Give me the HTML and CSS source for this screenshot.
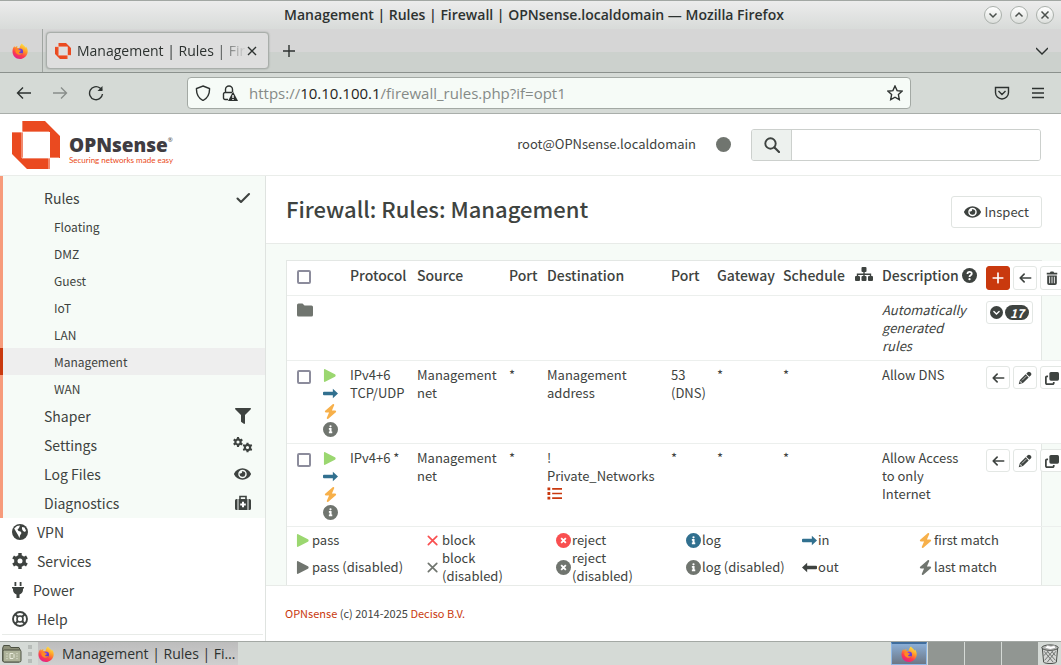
FILE: index.html
```html
<!DOCTYPE html>
<html lang="en">
<head>
<meta charset="utf-8">
<title>Management | Rules | Firewall | OPNsense.localdomain</title>
<link rel="stylesheet" href="styles.css">
</head>
<body>
<svg class="defs" aria-hidden="true">
  <defs>
    <linearGradient id="fox-g" x1="0.8" y1="0" x2="0.3" y2="1"><stop offset="0" stop-color="#fff04a"/><stop offset="0.4" stop-color="#ff9a26"/><stop offset="0.7" stop-color="#ff3d4c"/><stop offset="1" stop-color="#e0208c"/></linearGradient>
    <linearGradient id="fox-p" x1="0" y1="0" x2="1" y2="1"><stop offset="0" stop-color="#9b46ee"/><stop offset="1" stop-color="#4a36c8"/></linearGradient>
  </defs>
  <symbol id="firefox" viewBox="0 0 32 32">
    <path fill="url(#fox-g)" d="M20 1c1 3 5 4 7 8 1 0 1-1 1-2 3 4 4 8 3 13-2 7-8 12-15 12C7 32 1 25 1 17c0-4 1-8 4-11 0 1 0 2 1 3 2-2 4-3 5-3-1 2-1 3 0 4h4c1-4 2-7 5-9z"/>
    <circle cx="16" cy="17" r="6" fill="url(#fox-p)"/>
    <path fill="#ff8a22" d="M7 13c3-2 6-1 8 1 1 1 3 1 3 2s-3 1-4 3c1 2 4 2 7 1-2 4-8 5-12 1-2-2-3-5-2-8z"/>
  </symbol>
  <symbol id="brand" viewBox="0 0 48 48"><path fill="#ea4a20" fill-rule="evenodd" d="M10 0h23l15 15v22H38v11H15L0 33V11h10zM11 11h27v26H11z"/><path d="M10 0v37h37M0 11h37v37" fill="none" stroke="#fff" stroke-width="1" opacity=".7"/></symbol>
  <symbol id="eye" viewBox="0 0 576 512"><path d="M572.52 241.4C518.29 135.59 410.93 64 288 64S57.68 135.64 3.48 241.41a32.35 32.35 0 0 0 0 29.19C57.71 376.41 165.07 448 288 448s230.32-71.64 284.52-177.41a32.35 32.35 0 0 0 0-29.19zM288 400a144 144 0 1 1 144-144 143.93 143.93 0 0 1-144 144zm0-240a95.31 95.31 0 0 0-25.31 3.79 47.85 47.85 0 0 1-66.9 66.9A95.78 95.78 0 1 0 288 160z"/></symbol>
  <symbol id="filter" viewBox="0 0 512 512"><path d="M487.976 0H24.028C2.71 0-8.047 25.866 7.058 40.971L192 225.941V432c0 7.831 3.821 15.17 10.237 19.662l80 55.98C298.02 518.69 320 507.493 320 487.98V225.941l184.947-184.97C520.021 25.896 509.338 0 487.976 0z"/></symbol>
  <symbol id="bolt" viewBox="0 0 448 512"><path d="M349.4 44.6c5.9-13.7 1.5-29.7-10.6-38.5s-28.6-8-39.9 1.8l-256 224c-10 8.8-13.6 22.9-8.9 35.3S50.7 288 64 288H175.500L98.6 467.4c-5.9 13.7-1.5 29.7 10.6 38.500s28.6 8 39.9-1.8l256-224c10-8.8 13.6-22.9 8.9-35.3s-16.6-20.7-30-20.7H272.500L349.4 44.600z"/></symbol>
  <symbol id="play" viewBox="0 0 448 512"><path d="M41 39c-14.8-9.1-41-.9-41 41V432c0 42 26.200 50.100 41 41L375 297c34-18 34-64 0-82L41 39z"/></symbol>
  <symbol id="info" viewBox="0 0 512 512"><path d="M256 512A256 256 0 1 0 256 0a256 256 0 1 0 0 512zM200 326h24V262H200v-58h92v122h24v58H200zM256 110a38 38 0 1 1 0 76 38 38 0 1 1 0-76z"/></symbol>
  <symbol id="xcircle" viewBox="0 0 16 16"><circle cx="8" cy="8" r="8"/><path d="M5.500 5.500l5 5m0-5l-5 5" stroke="#fff" stroke-width="2"/></symbol>
  <symbol id="question" viewBox="0 0 16 16"><circle cx="8" cy="8" r="8"/><path d="M5.800 6.300c0-3 4.600-2.800 4.600-.2C10.400 7.800 8 7.700 8 9.500" fill="none" stroke="#fff" stroke-width="1.900"/><circle cx="8" cy="11.900" r="1.200" fill="#fff"/></symbol>
  <symbol id="times" viewBox="0 0 16 16"><path d="M2.500 3.500l9 9m0-9l-9 9" stroke="currentColor" stroke-width="1.800" stroke-linecap="round"/></symbol>
  <symbol id="long-right" viewBox="0 0 16 16"><path d="M1 6.200h9.500V3L16 8l-5.500 5V9.800H1a1 1 0 0 1-1-1V7.200a1 1 0 0 1 1-1z"/></symbol>
  <symbol id="long-left" viewBox="0 0 16 16"><path d="M15 6.200H5.500V3L0 8l5.500 5V9.800H15a1 1 0 0 0 1-1V7.200a1 1 0 0 0-1-1z"/></symbol>
  <symbol id="arrow-left" viewBox="0 0 16 16"><path d="M14.500 8H2.500M7 3.500L2.500 8 7 12.500" fill="none" stroke="currentColor" stroke-width="1.900" stroke-linecap="round" stroke-linejoin="round"/></symbol>
  <symbol id="plus" viewBox="0 0 16 16"><path d="M8 2.500v11M2.500 8h11" stroke="currentColor" stroke-width="1.900" stroke-linecap="round"/></symbol>
  <symbol id="check" viewBox="0 0 16 16"><path d="M2.500 8.500L6 12l8-8" fill="none" stroke="currentColor" stroke-width="2.100" stroke-linecap="round" stroke-linejoin="round"/></symbol>
  <symbol id="trash" viewBox="0 0 16 16"><path d="M2 2h3.500l1-1.500h3l1 1.500H14v2H2zM2.500 5h11v9a2 2 0 0 1-2 2h-7a2 2 0 0 1-2-2z"/><path d="M5.300 6.500V14M8 6.500V14M10.700 6.500V14" stroke="#fff"/></symbol>
  <symbol id="pencil" viewBox="0 0 16 16"><path d="M11 1.500c1-1 2-1 3 0l.6.600c1 1 1 2 0 3L13 6.500 9.500 3zM8.700 3.800l3.500 3.500-6.500 6.500L.8 15.200 2.200 10.300z"/><path d="M4.500 10.800l5-5M3 11.500v1.500h1.500" fill="none" stroke="#fff" stroke-width=".8"/></symbol>
  <symbol id="clone" viewBox="0 0 16 16"><rect x="5" y="1" width="11" height="10" rx="1.800"/><path d="M3.500 6H2.200A1.200 1.200 0 0 0 1 7.200v6.600A1.200 1.200 0 0 0 2.200 15h6.600a1.200 1.200 0 0 0 1.200-1.200v-1.300" fill="none" stroke="currentColor" stroke-width="2"/></symbol>
  <symbol id="folder" viewBox="0 0 16 16"><path d="M0 3A1.500 1.500 0 0 1 1.500 1.500h4l2 2h7A1.500 1.500 0 0 1 16 5v8a1.500 1.500 0 0 1-1.500 1.500h-13A1.500 1.500 0 0 1 0 13z"/></symbol>
  <symbol id="sitemap" viewBox="0 0 18 16"><rect x="6.500" y="1" width="5" height="5" rx="1"/><rect x="0" y="10" width="5" height="5" rx="1"/><rect x="6.500" y="10" width="5" height="5" rx="1"/><rect x="13" y="10" width="5" height="5" rx="1"/><path d="M9 5v6M2.500 11V8.200h13V11" fill="none" stroke="currentColor" stroke-width="1.400"/></symbol>
  <symbol id="chev" viewBox="0 0 16 16"><circle cx="8" cy="8" r="8"/><path d="M4.800 6.800L8 9.800l3.200-3" fill="none" stroke="#fff" stroke-width="1.700" stroke-linecap="round"/></symbol>
  <symbol id="list" viewBox="0 0 16 16"><path d="M5.500 3H16M5.500 8H16M5.500 13H16" stroke="currentColor" stroke-width="1.800"/><path d="M.5 1.500h3v3h-3zM.5 6.500h3v3h-3zM.5 11.500h3v3h-3z"/></symbol>
  <symbol id="cog" viewBox="0 0 16 16"><circle cx="8" cy="8" r="4.200" fill="none" stroke="currentColor" stroke-width="3.400"/><path d="M8 0v3.500M8 12.500V16M1.100 4l3 1.750M11.900 10.250l3 1.750M14.900 4l-3 1.750M4.100 10.250l-3 1.750" stroke="currentColor" stroke-width="3.400"/></symbol>
  <symbol id="cogs" viewBox="0 0 20 16"><use href="#cog" x="0" y="0" width="10" height="10"/><use href="#cog" x="9.500" y="5.500" width="10" height="10"/></symbol>
  <symbol id="medkit" viewBox="0 0 16 16"><path d="M0 5.500A1.500 1.500 0 0 1 1.500 4H2.500v11h-1A1.500 1.500 0 0 1 0 13.500zM13.500 4h1A1.500 1.500 0 0 1 16 5.500v8a1.500 1.500 0 0 1-1.500 1.500h-1zM3.500 4h9v11h-9z"/><path d="M5 4V1.500h6V4" fill="none" stroke="currentColor" stroke-width="1.600"/><path d="M8 6.700v5.600M5.200 9.500h5.600" stroke="#fff" stroke-width="2"/></symbol>
  <symbol id="globe" viewBox="0 0 16 16"><circle cx="8" cy="8" r="8"/><path fill="#fff" d="M2.200 4.500L5 2l3-.5L7 4 5.500 5.500l1 1.500 2 .5L9.500 9 8 11.500 7.500 14 6 11 4.500 8.500zM10 3l2.500.5 1.500 3L13 8l-2-1-1-2z"/></symbol>
  <symbol id="plug" viewBox="0 0 12 16"><path d="M2.500 0h1.800v4H2.500zM7.700 0h1.800v4H7.700zM0 5h12v1.500h-1V8a5 5 0 0 1-3.500 4.500V16h-3v-3.500A5 5 0 0 1 1 8V6.500H0z"/></symbol>
  <symbol id="ring" viewBox="0 0 16 16"><g fill="none" stroke="currentColor"><circle cx="8" cy="8" r="7" stroke-width="1.900"/><circle cx="8" cy="8" r="3" stroke-width="1.600"/><path d="M3 3l3 3M13 3l-3 3M3 13l3-3M13 13l-3-3" stroke-width="2"/></g></symbol>
  <symbol id="search" viewBox="0 0 16 16"><circle cx="6.500" cy="6.500" r="5.200" fill="none" stroke="currentColor" stroke-width="1.900"/><path d="M10.500 10.500l4.500 4.500" stroke="currentColor" stroke-width="2.100" stroke-linecap="round"/></symbol>
</svg>

<header class="titlebar">
  <span class="window-title">Management | Rules | Firewall | OPNsense.localdomain — Mozilla Firefox</span>
  <div class="window-buttons">
    <button class="round" aria-label="Minimize"><svg viewBox="0 0 16 16"><path d="M4.500 6.500L8 10l3.500-3.500"/></svg></button>
    <button class="round" aria-label="Maximize"><svg viewBox="0 0 16 16"><path d="M4.500 9.500L8 6l3.500 3.500"/></svg></button>
    <button class="round" aria-label="Close"><svg viewBox="0 0 16 16"><path d="M4.500 4.500l7 7m0-7l-7 7"/></svg></button>
  </div>
</header>

<div class="tabbar">
  <button class="pinned" aria-label="Firefox View"><svg class="i16"><use href="#firefox"/></svg></button>
  <div class="tab">
    <svg class="i16"><use href="#brand"/></svg>
    <span class="tab-text">Management | Rules | Fire</span>
    <button class="plain" aria-label="Close tab"><svg class="i12 line" viewBox="0 0 12 12"><path d="M2 2l8 8m0-8l-8 8"/></svg></button>
  </div>
  <button class="plain newtab" aria-label="New tab"><svg class="i12 line" viewBox="0 0 12 12"><path d="M6 0v12M0 6h12"/></svg></button>
  <button class="plain alltabs" aria-label="List all tabs"><svg class="i12 line" viewBox="0 0 12 12"><path d="M0 3l6 6 6-6"/></svg></button>
</div>

<nav class="toolbar">
  <div class="nav-buttons">
    <button class="plain" aria-label="Back"><svg class="i16 line" viewBox="0 0 16 16"><path d="M15 8H1.500M7 2.500L1.500 8 7 13.500"/></svg></button>
    <button class="plain faded" aria-label="Forward"><svg class="i16 line" viewBox="0 0 16 16"><path d="M1 8h13.500M9 2.500L14.500 8 9 13.500"/></svg></button>
    <button class="plain" aria-label="Reload"><svg class="i16 line" viewBox="0 0 16 16"><path d="M14.500 9A6.500 6.500 0 1 1 12 3l2 2"/><path d="M14.500 1v5h-5z" fill="currentColor" stroke="none"/></svg></button>
  </div>
  <div class="address">
    <svg class="i16 line" viewBox="0 0 16 16"><path d="M8 1l6.500 2.500c.3 6-2 9.500-6.500 12-4.500-2.500-6.800-6-6.500-12z"/></svg>
    <svg class="i16 line" viewBox="0 0 16 16"><path d="M6 14.500H3a1.500 1.500 0 0 1-1.500-1.500V9A1.500 1.500 0 0 1 3 7.500h7M3.500 7V4.500a3.500 3.500 0 0 1 7 0V7"/><path d="M11 6.500L16 16H6z" fill="currentColor" stroke="none"/><path d="M11 10v3m0 1v1" stroke="#fff"/></svg>
    <span class="url">https://<b>10.10.100.1</b>/firewall_rules.php?if=opt1</span>
    <button class="plain" aria-label="Bookmark"><svg class="i16 line" viewBox="0 0 16 16"><path d="M8 1l2.100 4.600 4.900.6-3.600 3.400.9 5L8 12.200 3.700 14.600l.9-5L1 6.200l4.900-.6z"/></svg></button>
  </div>
  <div class="tool-buttons">
    <button class="plain" aria-label="Pocket"><svg class="i16 line" viewBox="0 0 16 16"><path d="M1.500 2.500h13v5a6.500 6.500 0 0 1-13 0zM4.500 6L8 9.500 11.500 6"/></svg></button>
    <button class="plain" aria-label="Menu"><svg class="i16 line" viewBox="0 0 16 16"><path d="M2 3.500h12M2 8h12M2 12.500h12"/></svg></button>
  </div>
</nav>

<div class="page">
  <header class="site-header">
    <a class="logo" href="#">
      <svg class="logo-mark"><use href="#brand"/></svg>
      <span class="logo-words"><span class="logo-name">OPNsense<span class="reg">®</span></span><span class="tagline">Securing networks made easy</span></span>
    </a>
    <span class="user">root@OPNsense.localdomain</span>
    <span class="status-dot"></span>
    <div class="search">
      <label class="search-label" for="q" aria-label="Search"><svg class="i16"><use href="#search"/></svg></label>
      <input id="q" type="text">
    </div>
  </header>

  <div class="columns">
    <aside class="sidebar">
      <div class="submenu">
        <a class="item" href="#">Rules<svg class="i16"><use href="#check"/></svg></a>
        <a class="sub" href="#">Floating</a>
        <a class="sub" href="#">DMZ</a>
        <a class="sub" href="#">Guest</a>
        <a class="sub" href="#">IoT</a>
        <a class="sub" href="#">LAN</a>
        <a class="sub active" href="#">Management</a>
        <a class="sub" href="#">WAN</a>
        <a class="item" href="#">Shaper<svg class="i16"><use href="#filter"/></svg></a>
        <a class="item" href="#">Settings<svg class="i20"><use href="#cogs"/></svg></a>
        <a class="item" href="#">Log Files<svg class="eye-icon"><use href="#eye"/></svg></a>
        <a class="item" href="#">Diagnostics<svg class="i16"><use href="#medkit"/></svg></a>
      </div>
      <div class="mainmenu">
        <a class="top" href="#"><svg class="i16"><use href="#globe"/></svg>VPN</a>
        <a class="top" href="#"><svg class="i16"><use href="#cog"/></svg>Services</a>
        <a class="top" href="#"><svg class="i12w"><use href="#plug"/></svg>Power</a>
        <a class="top" href="#"><svg class="i16"><use href="#ring"/></svg>Help</a>
      </div>
    </aside>

    <main class="main">
      <div class="heading">
        <h1>Firewall: Rules: Management</h1>
        <button class="inspect"><svg class="eye-icon"><use href="#eye"/></svg>Inspect</button>
      </div>
      <div class="content">
        <div class="box">
          <table class="rules">
            <colgroup><col class="c-check"><col class="c-icons"><col class="c-proto"><col class="c-source"><col class="c-port"><col class="c-dest"><col class="c-dport"><col class="c-gate"><col class="c-sched"><col class="c-cat"><col class="c-desc"><col class="c-cmd"></colgroup>
            <thead>
              <tr>
                <th><input type="checkbox" aria-label="Select all"></th><th></th><th>Protocol</th><th>Source</th><th>Port</th><th>Destination</th><th>Port</th><th>Gateway</th><th>Schedule</th>
                <th><svg class="i18"><use href="#sitemap"/></svg></th>
                <th>Description <svg class="i15"><use href="#question"/></svg></th>
                <th><div class="cmds"><button class="btn primary" aria-label="Add"><svg class="i14"><use href="#plus"/></svg></button><button class="btn" aria-label="Move"><svg class="i14"><use href="#arrow-left"/></svg></button><button class="btn" aria-label="Delete"><svg class="i14"><use href="#trash"/></svg></button></div></th>
              </tr>
            </thead>
            <tbody>
              <tr>
                <td><svg class="i16 grey"><use href="#folder"/></svg></td><td></td><td></td><td></td><td></td><td></td><td></td><td></td><td></td><td></td>
                <td class="desc"><i>Automatically generated rules</i></td>
                <td><div class="cmds"><button class="btn count" aria-label="Expand"><svg class="i13"><use href="#chev"/></svg><span class="badge">17</span></button></div></td>
              </tr>
              <tr>
                <td><input type="checkbox" aria-label="Select Allow DNS"></td>
                <td><div class="stack"><svg class="i15 green"><use href="#play"/></svg><svg class="i15 blue"><use href="#long-right"/></svg><svg class="i15 orange"><use href="#bolt"/></svg><svg class="i15 grey"><use href="#info"/></svg></div></td>
                <td>IPv4+6 TCP/UDP</td><td>Management net</td><td>*</td><td>Management address</td><td>53 (DNS)</td><td>*</td><td>*</td><td></td><td class="desc">Allow DNS</td>
                <td><div class="cmds"><button class="btn" aria-label="Move"><svg class="i14"><use href="#arrow-left"/></svg></button><button class="btn" aria-label="Edit"><svg class="i14"><use href="#pencil"/></svg></button><button class="btn" aria-label="Clone"><svg class="i14"><use href="#clone"/></svg></button></div></td>
              </tr>
              <tr>
                <td><input type="checkbox" aria-label="Select Allow Access to only Internet"></td>
                <td><div class="stack"><svg class="i15 green"><use href="#play"/></svg><svg class="i15 blue"><use href="#long-right"/></svg><svg class="i15 orange"><use href="#bolt"/></svg><svg class="i15 grey"><use href="#info"/></svg></div></td>
                <td>IPv4+6 *</td><td>Management net</td><td>*</td><td>! Private_Networks <svg class="i15 red"><use href="#list"/></svg></td><td>*</td><td>*</td><td>*</td><td></td><td class="desc">Allow Access to only Internet</td>
                <td><div class="cmds"><button class="btn" aria-label="Move"><svg class="i14"><use href="#arrow-left"/></svg></button><button class="btn" aria-label="Edit"><svg class="i14"><use href="#pencil"/></svg></button><button class="btn" aria-label="Clone"><svg class="i14"><use href="#clone"/></svg></button></div></td>
              </tr>
            </tbody>
          </table>
          <table class="legend">
            <colgroup><col class="ic"><col class="wide"><col class="ic"><col class="wide"><col class="ic"><col class="wide"><col class="ic"><col class="mid"><col class="ic"><col class="mid"><col class="ic"><col></colgroup>
            <tbody>
              <tr>
                <td><svg class="i15 green"><use href="#play"/></svg></td><td>pass</td>
                <td><svg class="i15 bright"><use href="#times"/></svg></td><td>block</td>
                <td><svg class="i15 bright"><use href="#xcircle"/></svg></td><td>reject</td>
                <td><svg class="i15 blue"><use href="#info"/></svg></td><td>log</td>
                <td><svg class="i15 blue"><use href="#long-right"/></svg></td><td>in</td>
                <td><svg class="i15 orange"><use href="#bolt"/></svg></td><td>first match</td>
              </tr>
              <tr>
                <td><svg class="i15 grey"><use href="#play"/></svg></td><td>pass (disabled)</td>
                <td><svg class="i15 grey"><use href="#times"/></svg></td><td>block<br>(disabled)</td>
                <td><svg class="i15 grey"><use href="#xcircle"/></svg></td><td>reject<br>(disabled)</td>
                <td><svg class="i15 grey"><use href="#info"/></svg></td><td>log (disabled)</td>
                <td><svg class="i15"><use href="#long-left"/></svg></td><td>out</td>
                <td><svg class="i15 grey"><use href="#bolt"/></svg></td><td>last match</td>
              </tr>
            </tbody>
          </table>
        </div>
      </div>
      <footer class="footer"><a href="#">OPNsense</a> (c) 2014-2025 <a href="#">Deciso B.V.</a></footer>
    </main>
  </div>
</div>

<footer class="taskbar">
  <button class="plain" aria-label="Files"><svg class="i20" viewBox="0 0 20 20"><path d="M.7 4l1-2.500h6l1 2H17l1 2v11l-1 1.500H1.700l-1-1z" fill="#8d9079" stroke="#4c5142"/><rect x="1" y="6" width="18" height="12" rx="1.500" fill="#aeb39a" stroke="#4c5142"/><path d="M5 9.500v.1M5 12v.1M5 14.500v.1M15 9.500v.1M15 12v.1M15 14.500v.1" stroke="#e9ecdc" stroke-linecap="round" stroke-width="1.200"/><path d="M8 9.500v5h3l1-1v-3l-1-1z" fill="none" stroke="#e9ecdc"/></svg></button>
  <span class="grip"></span>
  <button class="task"><svg class="i16"><use href="#firefox"/></svg><span>Management | Rules | Fi…</span></button>
  <div class="pager">
    <button class="desk current" aria-label="Desktop 1"><svg class="i16"><use href="#firefox"/></svg></button>
    <button class="desk" aria-label="Desktop 2"></button>
    <button class="desk" aria-label="Desktop 3"></button>
    <button class="desk" aria-label="Desktop 4"></button>
    <button class="plain bin" aria-label="Trash"><svg class="i20" viewBox="0 0 20 22"><path d="M1.500 4l1.500 16c2 2 12 2 14 0L18.500 4z" fill="#d5d7d5" stroke="#3f423f"/><path d="M3.500 8l10 12M7 8l9 10M12 8l4 5M16.500 8L7 20M13 8L4 18M8 8l-5 5" stroke="#676b68"/><ellipse cx="10" cy="4" rx="9" ry="3" fill="#b9bcb9" stroke="#3f423f"/><path d="M4 4.500l3-3 4 1 4-1 1.500 3-6 1.500z" fill="#fff" stroke="#8a8c8a" stroke-width=".6"/></svg></button>
  </div>
</footer>
</body>
</html>
```
FILE: styles.css
```css
* { box-sizing: border-box; }

body {
  margin: 0;
  height: 100vh;
  display: flex;
  flex-direction: column;
  overflow: hidden;
  font: 13px/18px "Noto Sans CJK SC", "Noto Sans", sans-serif;
  color: #3e4340;
  background: #fff;
}

a { color: inherit; text-decoration: none; }
button { font: inherit; color: inherit; padding: 0; }
svg { fill: currentColor; flex: none; display: block; }

.defs { position: absolute; width: 0; height: 0; }
.i12 { width: 12px; height: 12px; }
.i12w { width: 12px; height: 16px; }
.i13 { width: 13px; height: 13px; }
.i14 { width: 14px; height: 14px; }
.i15 { width: 15px; height: 15px; }
.i16 { width: 16px; height: 16px; }
.i18 { width: 18px; height: 16px; }
.i20 { width: 20px; height: 20px; }
.line { fill: none; stroke: currentColor; stroke-width: 1.4; }

.green { color: #9bd770; }
.blue { color: #31708f; }
.orange { color: #f7b04a; }
.grey { color: #70756f; }
.red { color: #c9390e; }
.bright { color: #f94f50; }

.plain { border: 0; background: none; display: grid; place-items: center; }

/* browser window */
.titlebar, .tabbar, .toolbar, .taskbar {
  flex: none;
  display: flex;
  align-items: center;
  font-family: "Open Sans", "Noto Sans", sans-serif;
  color: #2d3230;
}

.titlebar {
  height: 29px;
  border-top: 1px solid #a2a7a3;
  background: linear-gradient(#ececec, #d8dbd9);
  font-size: 14px;
  font-weight: 600;
}
.window-title { flex: 1; text-align: center; padding-left: 84px; }
.window-buttons { display: flex; gap: 8px; padding-right: 7px; }
.round {
  width: 18px;
  height: 18px;
  border: 1px solid #aab0ab;
  border-radius: 50%;
  background: linear-gradient(#fff, #dcdfdc);
}
.round svg { width: 16px; height: 16px; fill: none; stroke: #4b504d; stroke-width: 1.5; }

.tabbar {
  height: 44px;
  border-bottom: 1px solid #8b918d;
  background: linear-gradient(#d6d6d6 23px, #ccd1cd 23px);
  font-size: 14px;
}
.pinned {
  width: 43px;
  height: 100%;
  padding-right: 3px;
  border: 0;
  border-right: 1px solid #a0a5a1;
  background: none;
  display: grid;
  place-items: center;
}
.tab {
  display: flex;
  align-items: center;
  width: 223px;
  height: 37px;
  margin-left: 3px;
  padding: 0 10px 0 8px;
  border: 1px solid #a9aeaa;
  border-radius: 4px;
  background: #dedede;
  box-shadow: 0 0 2px #9a9f9b;
}
.tab .plain { margin-left: -8px; }
.tab-text {
  flex: 1;
  margin-left: 6px;
  white-space: nowrap;
  mask-image: linear-gradient(to right, #000 78%, transparent 96%);
}
.newtab { width: 40px; }
.alltabs { margin-left: auto; width: 38px; }

.toolbar { height: 41px; border-bottom: 1px solid #a9aeaa; background: #d5dad6; font-size: 15px; }
.nav-buttons { flex: none; display: flex; gap: 20px; width: 187px; padding-left: 16px; }
.faded { opacity: 0.45; }
.address {
  flex: 1;
  display: flex;
  align-items: center;
  gap: 11px;
  height: 32px;
  padding: 0 7px;
  border: 1px solid #a3a9a4;
  border-radius: 4px;
  background: #f6fbf7;
}
.url { flex: 1; color: #858a87; }
.url b { font-weight: 400; color: #1f2422; }
.tool-buttons { flex: none; display: flex; justify-content: flex-end; gap: 20px; width: 150px; padding-right: 15px; }

/* web page */
.page { flex: 1; min-height: 0; display: flex; flex-direction: column; overflow: hidden; }

.site-header {
  flex: none;
  display: flex;
  align-items: center;
  height: 62px;
  padding: 0 20px 0 12px;
  border-bottom: 1px solid #eaedea;
}
.logo { display: flex; gap: 9px; margin-right: auto; }
.logo-mark { width: 48px; height: 48px; }
.logo-words { display: flex; flex-direction: column; padding-top: 14px; }
.logo-name { display: flex; align-items: flex-start; font: 800 19px/20px "Open Sans", sans-serif; color: #403c41; }
.reg { font-size: 6px; font-weight: 400; line-height: 10px; }
.tagline { font: 8px/10px "Lato", sans-serif; color: #ea4a20; }
.user { padding-bottom: 2px; }
.status-dot { width: 15px; height: 15px; margin: 0 20px; border-radius: 50%; background: #70756f; }
.search { display: flex; width: 290px; height: 32px; border: 1px solid #ccd0cd; border-radius: 3px; overflow: hidden; }
.search-label { width: 40px; display: grid; place-items: center; background: #edf1ee; border-right: 1px solid #ccd0cd; }
.search input { flex: 1; min-width: 0; border: 0; font: inherit; padding: 0 8px; }

.columns { flex: 1; min-height: 0; display: flex; }

.sidebar { flex: none; width: 266px; border-right: 1px solid #dfe3e0; font-size: 14px; }
.submenu { padding-top: 8px; border-left: 3px solid #f79b7b; background: #f6fbf7; }
.item, .top { display: flex; align-items: center; padding-bottom: 2px; }
.item { height: 29px; padding-left: 41px; padding-right: 14px; justify-content: space-between; }
.item .i20 { margin-right: -2px; }
.sub { display: flex; align-items: center; height: 27px; padding-left: 51px; font-size: 12px; }
.sub.active { margin-left: -3px; border-left: 3px solid #c9390e; background: #eee; }
.mainmenu { margin: 0 2px; border-bottom: 1px solid #e8ebe8; }
.top { height: 29px; padding-left: 10px; gap: 9px; }

.main { flex: 1; min-width: 0; display: flex; flex-direction: column; }
.heading {
  flex: none;
  display: flex;
  align-items: center;
  justify-content: space-between;
  height: 68px;
  padding: 4px 19px 0 20px;
  border-bottom: 1px solid #e8ebe8;
}
h1 { margin: 0 0 8px; font-size: 22px; line-height: 32px; font-weight: 500; }
.inspect {
  display: flex;
  align-items: center;
  gap: 4px;
  height: 32px;
  padding: 0 12px;
  border: 1px solid #e0e4e1;
  border-radius: 3px;
  background: #fff;
}
.eye-icon { width: 17px; height: 16px; }

.content { flex: none; padding: 16px 19px 0 20px; background: #f6fbf7; border-bottom: 1px solid #e8ebe8; }
.box { border: 1px solid #e3e7e4; border-bottom: 0; background: #fff; }

/* the command column runs past the right edge of the box */
.rules { width: calc(100% + 49px); table-layout: fixed; border-collapse: collapse; }
.rules th, .rules td { padding: 5px; text-align: left; vertical-align: top; font-weight: 400; border-bottom: 1px solid #ecefed; }
.rules th { font-size: 14px; font-weight: 500; white-space: nowrap; }
.rules .desc { padding-right: 12px; }
.rules thead tr, .rules tbody tr:nth-child(even) { background: #fff; }
.rules th:first-child, .rules td:first-child { padding-left: 10px; }
.rules td svg { margin-top: 1px; }
.rules .cmds svg, .rules .stack svg { margin: 0; }
.rules th .i15 { display: inline-block; vertical-align: -2px; }
.c-check { width: 31px; }
.c-icons { width: 27px; }
.c-proto { width: 67px; }
.c-source { width: 92px; }
.c-port { width: 38px; }
.c-dport { width: 46px; }
.c-gate { width: 66px; }
.c-sched { width: 72px; }
.c-cat { width: 27px; }
.c-desc { width: 104px; }
.c-cmd { width: 109px; }

input[type="checkbox"] {
  appearance: none;
  display: block;
  width: 14px;
  height: 14px;
  margin: 4px 0 0;
  border: 2px solid #8c8c9c;
  border-radius: 2px;
  background: #fff;
}

.stack { display: grid; grid-auto-rows: 18px; align-items: center; }
.cmds { display: flex; gap: 3px; }
.btn {
  display: flex;
  align-items: center;
  justify-content: center;
  width: 24px;
  height: 23px;
  border: 1px solid #e3e7e4;
  border-radius: 3px;
  background: #fff;
}
.rules thead .btn { height: 24px; }
.btn.primary { border-color: #c9390e; background: #c9390e; color: #fff; }
.count { width: 47px; gap: 2px; }
.badge { width: 24px; height: 15px; border-radius: 8px; background: #3e4340; color: #fff; font-size: 12px; line-height: 15px; font-style: italic; font-weight: 700; }

.legend { width: 100%; table-layout: fixed; border-collapse: collapse; margin: 4px 0 0; }
.legend td { padding: 0; }
.legend td:first-child { padding-left: 9px; }
.legend .ic { width: 16px; }
.legend .ic:first-child { width: 25px; }
.legend .wide { width: 114px; }
.legend .mid { width: 100px; }

.footer { padding: 18px 19px; font-size: 11px; }
.footer a { color: #c9390e; }

/* desktop panel */
.taskbar { height: 24px; border-top: 1px solid #a3a8a4; background: #d5dad6; font-size: 14px; }
.taskbar > .plain { width: 24px; }
.grip { width: 4px; height: 18px; margin: 0 6px 0 4px; background: repeating-linear-gradient(#b7bcb8 0 4px, transparent 4px 7px); }
.task { display: flex; align-items: center; gap: 8px; width: 200px; height: 100%; padding: 0; border: 0; background: linear-gradient(#bdbdbd, #cfcfcf); white-space: nowrap; }
.pager { display: flex; gap: 1px; height: 100%; margin-left: auto; }
.desk { width: 36px; border: 0; background: #919692; display: grid; place-items: center; }
.desk.current { border: 1px solid #8fb8e6; border-top: 2px solid #3f6d9d; background: linear-gradient(#8aaed6, #6c7785); }
.bin { width: 22px; }
```
